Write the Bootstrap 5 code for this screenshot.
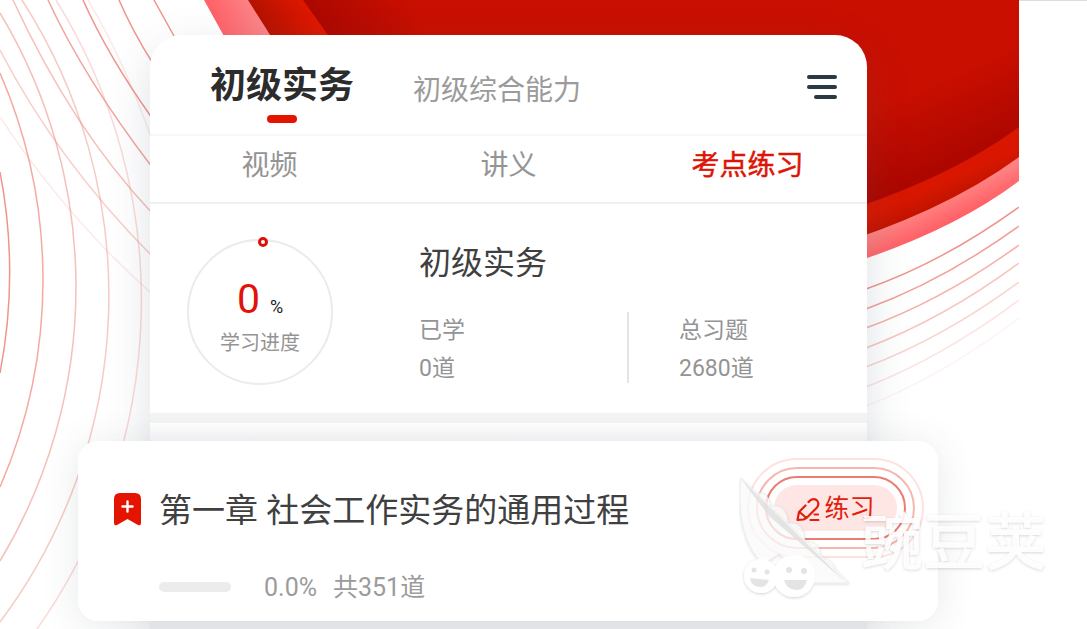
<!DOCTYPE html>
<html lang="zh-CN">
<head>
<meta charset="utf-8">
<meta name="viewport" content="width=device-width, initial-scale=1">
<title>初级实务</title>
<link rel="stylesheet" href="https://cdn.jsdelivr.net/npm/bootstrap@5.3.0/dist/css/bootstrap.min.css">
<script src="https://cdn.jsdelivr.net/npm/bootstrap@5.3.0/dist/js/bootstrap.bundle.min.js"></script>
<style>
  :root { --brand: #e51400; --ink: #2c2c2c; --soft: #949494; --rule: #f0f0f1; }
  body { font-family: Roboto, "Noto Sans CJK SC", sans-serif; color: #404040; background: #fff; }
  .page-shell { min-height: 100vh; padding-right: 68px; overflow: hidden; }
  .page-shell::after { content: ""; position: absolute; top: 0; right: 0; width: 68px; height: 1px; background: #ddd; }
  .stage { min-height: 100vh; padding: 35px 152px 0 150px; }
  .backdrop { position: absolute; inset: 0; width: 100%; height: 100%; }
  .phone { background: #fff; border-radius: 32px 32px 0 0; box-shadow: 0 14px 44px rgba(60, 75, 95, .17); }
  .phone-head { height: 101px; padding: 31px 29px 0 60px; border-bottom: 2px solid #f7f7f7; }
  .plain { border: 0; background: none; padding: 0; white-space: nowrap; }
  .course-on { font-size: 36px; line-height: 40px; font-weight: 700; color: var(--ink); }
  .course-on::after { content: ""; display: block; width: 30px; height: 8px; margin: 9px auto 0; border-radius: 4px; background: var(--brand); }
  .course-off { font-size: 28px; line-height: 50px; margin-left: 59px; color: #9b9b9b; }
  .subtabs { height: 68px; border-bottom: 2px solid var(--rule); }
  .subtabs button { flex: 1; font-size: 28px; line-height: 40px; padding-bottom: 6px; color: var(--soft); }
  .subtabs .picked { color: #dd1506; -webkit-text-stroke: .5px #dd1506; }
  .summary { height: 209px; padding: 35px 38px 0 37px; }
  .ring { flex: none; width: 146px; height: 146px; border: 2px solid #ebebeb; border-radius: 50%; padding-top: 36px; position: relative; }
  .ring::before { content: ""; position: absolute; top: -4px; left: 69px; width: 10px; height: 10px; border: 3px solid #de0f08; border-radius: 50%; background: #fff; }
  .ring-num { font-size: 41px; line-height: 44px; color: #e0120a; }
  .ring-pct { font-size: 18px; color: #222; margin-left: 10px; }
  .ring-cap { font-size: 20px; line-height: 28px; color: var(--soft); }
  .facts { margin-left: 86px; }
  .facts h1 { font-size: 32px; line-height: 48px; font-weight: 400; margin: 0; }
  .fact { font-size: 23px; line-height: 38px; color: var(--soft); }
  .fact-row { margin-top: 25px; }
  .fact-row .fact:first-child { width: 208px; }
  .fact-row .fact:last-child { border-left: 2px solid #e4e4e4; padding-left: 50px; height: 71px; }
  .fact-row p { margin: 0; }
  .band { height: 10px; background: #f4f4f4; }
  .phone-foot { background: linear-gradient(#fff, #f6f6f7 20px, #eceef1); padding-top: 18px; min-height: calc(100vh - 423px); }
  .chapter { background: #fff; margin: 0 -71px 0 -72px; height: 180px; border-radius: 20px; padding: 17px 14px 0 36px; box-shadow: 0 4px 36px rgba(60, 75, 95, .13); }
  .chapter h2 { font-size: 33px; line-height: 48px; font-weight: 400; margin: 0; padding-top: 6px; }
  .bookmark { flex: none; width: 27px; height: 33px; margin: 3px 18px 0 0; }
  .practice-halo { width: 177px; height: 100px; border: 2px solid #fde2df; border-radius: 50px; padding: 7px; }
  .practice-halo div { height: 100%; border: 2px solid #f7b6af; border-radius: 42px; padding: 7px; }
  .practice-halo div div { border-color: #ec7b72; border-radius: 34px; }
  .practice { width: 100%; height: 100%; border: 0; border-radius: 24px; background: #fde6e4; color: #e41d0c; font-size: 25px; line-height: 36px; padding: 2px 0 0; white-space: nowrap; }
  .progress-line { margin-left: 45px; margin-top: 10px; }
  .track { width: 72px; height: 10px; border-radius: 5px; background: #ececec; margin-right: 33px; }
  .stat { font-size: 25px; line-height: 36px; color: #9b9b9b; margin-right: 16px; padding-top: 2px; }
  .watermark { position: absolute; right: 38px; top: 470px; width: 310px; height: 135px; pointer-events: none; }
  .watermark text { font: 500 62px "Noto Sans CJK SC", sans-serif; }
</style>
</head>
<body>
<div class="page-shell position-relative">
  <main class="stage position-relative">
    <svg class="backdrop" viewBox="0 0 1019 629" preserveAspectRatio="xMaxYMin slice" aria-hidden="true">
      <defs>
        <linearGradient id="orange" gradientUnits="userSpaceOnUse" x1="262" y1="25" x2="310" y2="0"><stop offset="0" stop-color="#b51200"/><stop offset="1" stop-color="#e31800"/></linearGradient>
        <linearGradient id="orangeLow" gradientUnits="userSpaceOnUse" x1="940" y1="183" x2="952" y2="210"><stop offset="0" stop-color="#d91700"/><stop offset="1" stop-color="#b51200"/></linearGradient>
        <linearGradient id="pinkTop" gradientUnits="userSpaceOnUse" x1="215" y1="20" x2="255" y2="5"><stop offset="0" stop-color="#ff6268"/><stop offset="1" stop-color="#fb8689"/></linearGradient>
        <linearGradient id="pinkLow" gradientUnits="userSpaceOnUse" x1="940" y1="198" x2="953" y2="224"><stop offset="0" stop-color="#ff8585"/><stop offset="1" stop-color="#ff5c62"/></linearGradient>
        <linearGradient id="deep" gradientUnits="userSpaceOnUse" x1="890" y1="100" x2="930" y2="190"><stop offset="0" stop-color="#c90f00"/><stop offset="1" stop-color="#a80500"/></linearGradient>
        <linearGradient id="deepTop" gradientUnits="userSpaceOnUse" x1="315" y1="25" x2="400" y2="-20"><stop offset="0" stop-color="#ab0800"/><stop offset="1" stop-color="#c90f00"/></linearGradient>
      </defs>
      <path fill="url(#pinkTop)" d="M204 0L225 38H300V0z"/>
      <path fill="url(#orange)" d="M248 0L272 38H400V0z"/>
      <path fill="url(#deepTop)" d="M303 0L330 38H700V0z"/>
      <path fill="url(#pinkLow)" d="M820 273Q945 237 1019 181V100H820z"/>
      <path fill="url(#orangeLow)" d="M820 250Q943 213 1019 157V80H820z"/>
      <path fill="url(#deep)" d="M690 0H1019V127Q945 182 820 219V80H690z"/>
      <g fill="none" stroke="#f0958c" stroke-width="1.500">
        <path d="M154 0L174 36M119 0Q133 32 152 62M83 0Q108 56 152 118"/>
        <path opacity=".85" d="M48 0Q84 78 152 167"/>
        <path opacity=".6" d="M13 0Q72 128 152 213"/>
        <path opacity=".45" d="M0 50Q57 160 152 256"/>
        <path opacity=".2" d="M0 117Q64 215 152 294"/>
        <path d="M0 172A531 531 0 0 1 0 373"/>
        <path opacity=".8" d="M0 73A520 520 0 0 1 0 487"/>
        <path opacity=".6" d="M0 13A532 532 0 0 1 0 561"/>
        <path opacity=".5" d="M22 0A545 545 0 0 1 0 622"/>
        <path opacity=".35" d="M56 0A570 570 0 0 1 37 629"/>
        <path opacity=".2" d="M88 0Q125 62 152 140"/>
        <path d="M866 289Q943 262 1019 207"/>
        <path opacity=".9" d="M866 309Q943 281 1019 226"/>
        <path opacity=".75" d="M866 328Q943 300 1019 245"/>
        <path opacity=".55" d="M866 348Q943 319 1019 263"/>
        <path opacity=".4" d="M866 367Q943 338 1019 282"/>
        <path opacity=".25" d="M866 387Q943 357 1019 300"/>
        <path opacity=".1" d="M866 406Q943 376 1019 318"/>
      </g>
    </svg>

    <section class="phone position-relative">
      <header class="phone-head d-flex align-items-start">
        <button class="plain course-on" type="button">初级实务</button>
        <button class="plain course-off" type="button">初级综合能力</button>
        <button class="plain ms-auto" type="button" aria-label="菜单">
          <svg width="34" height="38" viewBox="0 0 34 38" fill="none" stroke="#2b3942" stroke-width="4" stroke-linecap="round"><path d="M5 11H31M5 21H31M12 31H31"/></svg>
        </button>
      </header>
      <nav class="subtabs d-flex">
        <button class="plain" type="button">视频</button>
        <button class="plain" type="button">讲义</button>
        <button class="plain picked" type="button">考点练习</button>
      </nav>
      <div class="summary d-flex align-items-start">
        <div class="ring text-center">
          <div class="ring-num">0<span class="ring-pct">%</span></div>
          <div class="ring-cap">学习进度</div>
        </div>
        <div class="facts">
          <h1>初级实务</h1>
          <div class="fact-row d-flex">
            <div class="fact"><p>已学</p><p>0道</p></div>
            <div class="fact"><p>总习题</p><p>2680道</p></div>
          </div>
        </div>
      </div>
      <div class="band"></div>
      <div class="phone-foot">
        <article class="chapter position-relative">
          <div class="d-flex align-items-center">
            <svg class="bookmark" viewBox="0 0 27 33" aria-hidden="true"><path fill="#e51400" d="M6 0H21Q27 0 27 6V30Q27 33 24 32L13.500 26L3 32Q0 33 0 30V6Q0 0 6 0z"/><path stroke="#fff" stroke-width="2.400" stroke-linecap="round" d="M8.500 13.500H18.500M13.500 8.500V18.500"/></svg>
            <h2>第一章 社会工作实务的通用过程</h2>
            <div class="practice-halo ms-auto"><div><div>
              <button class="practice d-flex align-items-center justify-content-center gap-1" type="button"><svg width="24" height="25" viewBox="0 0 24 25" fill="none" stroke="#e41d0c" stroke-width="2.200" stroke-linecap="round" stroke-linejoin="round" aria-hidden="true"><path d="M9.500 8.500L3 15L1.500 23L7.500 22.500Q10 21.500 12 19.500L21 10.500Q24 6 20.500 3Q16.500 .5 12.500 5M3.500 15L10.500 21M18.500 17.500H22M14.500 23H22.500"/></svg>练习</button>
            </div></div></div>
          </div>
          <div class="progress-line d-flex align-items-center">
            <div class="track"></div><span class="stat">0.0%</span><span class="stat">共351道</span>
          </div>
        </article>
      </div>
    </section>
  </main>
  <svg class="watermark" viewBox="0 0 310 135" aria-hidden="true">
    <defs><filter id="lift" x="-10%" y="-10%" width="120%" height="125%"><feDropShadow dx="0" dy="1" stdDeviation="1.500" flood-color="#000" flood-opacity=".18"/></filter></defs>
    <g filter="url(#lift)" fill="#fff">
      <g fill-opacity=".72" stroke="#e6e6e6" stroke-width=".7">
        <path d="M18 24Q28 19 32 36Q48 34 49 53Q66 52 66 72Q81 70 82 87Q95 89 97 103z"/>
        <path d="M2 8C-2 40 4 75 24 94L40 84L76 113H110z"/>
      </g>
      <path d="M2 9L109 114L30 46z" fill="#dedede" fill-opacity=".8"/>
      <circle cx="22" cy="106" r="17"/><circle cx="55" cy="106" r="21"/>
      <text x="122" y="95" fill-opacity=".88">豌豆荚</text>
    </g>
    <g fill="#e4e4e4"><circle cx="15" cy="100" r="2.500"/><circle cx="28" cy="102" r="2.500"/><circle cx="50" cy="100" r="3"/><circle cx="65" cy="101" r="3"/><path d="M11 108L30 110Q27 118 20 117Q12 116 11 108zM45 110H68Q66 120 57 120Q47 119 45 110z"/></g>
  </svg>
</div>
</body>
</html>
